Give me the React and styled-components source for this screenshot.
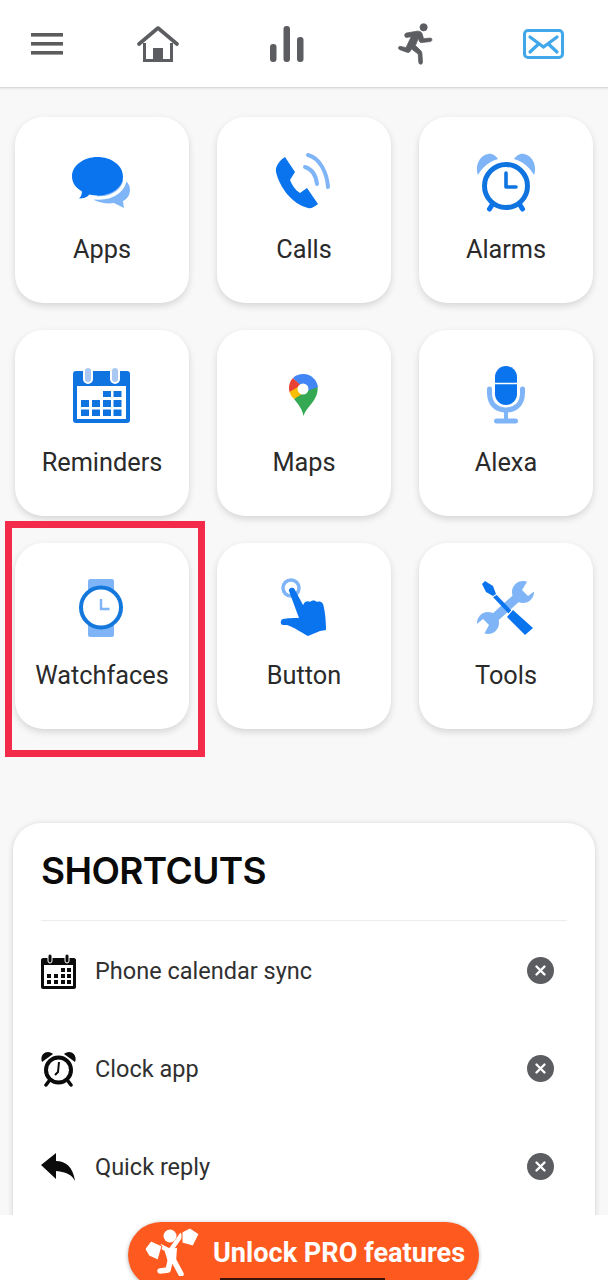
import styled, { createGlobalStyle } from "styled-components";

const GlobalStyle = createGlobalStyle`
  html, body {
    margin: 0;
    padding: 0;
    background: #f8f8f8;
    font-family: Roboto, "Liberation Sans", sans-serif;
  }
`;

const BLUE = "#0a74ee";
const LIGHT = "#7fb5f7";
const GREY = "#5c5d60";

const Page = styled.div`
  position: relative;
  width: 608px;
  height: 1280px;
  overflow: hidden;
  background: #f8f8f8;
`;

const TopBar = styled.header`
  height: 88px;
  background: #fff;
  border-bottom: 1px solid #d9d9d9;
  box-shadow: 0 1px 2px rgba(0, 0, 0, 0.08);
  display: flex;
  align-items: center;
  gap: 91px;
  padding: 0 0 0 31px;
  box-sizing: border-box;
`;

const Grid = styled.section`
  display: grid;
  grid-template-columns: repeat(3, 174px);
  grid-auto-rows: 186px;
  column-gap: 28px;
  row-gap: 27px;
  padding: 29px 0 0 15px;
`;

const Tile = styled.div`
  position: relative;
  background: #fff;
  border-radius: 28px;
  box-shadow: 0 3px 7px rgba(0, 0, 0, 0.14);
  display: flex;
  flex-direction: column;
  align-items: center;
  padding-top: 31px;
  box-sizing: border-box;
`;

const TileLabel = styled.span`
  margin-top: 16px;
  font-size: 25.3px;
  line-height: 32px;
  color: #2a2a2a;
`;

const Highlight = styled.div`
  position: absolute;
  left: -10px;
  top: -22px;
  width: 200px;
  height: 236px;
  box-sizing: border-box;
  border: 7px solid #f32a4a;
  pointer-events: none;
`;

const Card = styled.section`
  margin: 94px 13px 0;
  background: #fff;
  border-radius: 28px;
  box-shadow: 0 1px 6px rgba(0, 0, 0, 0.16);
  padding: 0 28px;
  height: 500px;
`;

const CardTitle = styled.h2`
  margin: 0;
  height: 98px;
  box-sizing: border-box;
  padding-top: 25px;
  font-family: Inter, "Open Sans", sans-serif;
  font-size: 37px;
  line-height: 46px;
  font-weight: 600;
  letter-spacing: -0.6px;
  color: #0a0a0a;
  border-bottom: 1px solid #ececec;
`;

const Row = styled.div`
  height: 98px;
  display: flex;
  align-items: center;
  gap: 19px;
  &:first-of-type {
    margin-top: 1px;
  }
`;

const RowIcon = styled.svg`
  width: 35px;
  height: 36px;
  flex: none;
`;

const RowLabel = styled.span`
  flex: 1;
  font-size: 23.5px;
  color: #303030;
`;

const Remove = styled.span`
  width: 27px;
  height: 27px;
  border-radius: 50%;
  background: ${GREY};
  display: flex;
  align-items: center;
  justify-content: center;
  margin: 0 13px 2px 0;
`;

const BottomBar = styled.footer`
  position: absolute;
  left: 0;
  right: 0;
  bottom: 0;
  height: 65px;
  background: #fff;
  display: flex;
  justify-content: center;
  padding-top: 7px;
  box-sizing: border-box;
`;

const ProButton = styled.div`
  width: 351px;
  height: 66px;
  margin-left: -1px;
  flex: none;
  border-radius: 33px;
  background: #fe5a20;
  box-shadow: 0 1px 4px rgba(0, 0, 0, 0.3);
  display: flex;
  align-items: flex-start;
  box-sizing: border-box;
  padding: 2px 0 0 16px;
  gap: 13px;
`;

const ProLabel = styled.span`
  color: #fff;
  font-size: 27.1px;
  line-height: 58px;
  font-weight: 700;
  white-space: nowrap;
`;

const NavHandle = styled.div`
  position: absolute;
  left: 220px;
  bottom: 0;
  width: 165px;
  height: 2px;
  background: #3a1408;
`;

const Glyph = styled.svg`
  display: block;
  flex: none;
`;

const MenuGlyph = styled(Glyph)`
  margin-right: -17px;
`;

const RunnerGlyph = styled(Glyph)`
  margin-left: 2px;
`;

const MailGlyph = styled(Glyph)`
  margin-left: -3px;
`;

const Hamburger = () => (
  <MenuGlyph width="32" height="22" viewBox="0 0 32 22" fill="#5c5c5c">
    <rect width="32" height="3.6" />
    <rect y="9" width="32" height="3.6" />
    <rect y="18" width="32" height="3.6" />
  </MenuGlyph>
);

const HomeIcon = () => (
  <Glyph width="42" height="36" viewBox="0 0 42 36">
    <path d="M2 18 21 2l19 16" fill="none" stroke={GREY} strokeWidth="3.6" strokeLinecap="round" strokeLinejoin="round" />
    <path d="M7.500 17v17.500h27V17" fill="none" stroke={GREY} strokeWidth="3" />
    <rect x="16" y="22" width="10" height="13" fill={GREY} />
  </Glyph>
);

const BarsIcon = () => (
  <Glyph width="34" height="36" viewBox="0 0 34 36" fill={GREY}>
    <rect x="0" y="18" width="6.500" height="18" rx="3" />
    <rect x="13.500" y="0" width="6.500" height="36" rx="3" />
    <rect x="27" y="11" width="6.500" height="25" rx="3" />
  </Glyph>
);

const RunnerIcon = () => (
  <RunnerGlyph width="38" height="42" viewBox="0 0 38 44" fill={GREY} stroke={GREY} strokeWidth="0.8">
    <circle cx="27" cy="4.500" r="3.800" />
    <path d="M9 10.500 20 8.600c3-.4 5 .8 5.500 3l1.400 4.800 7-.6c2.200-.2 2.400 3.300.2 3.600l-9 1.100c-1.300.1-2.300-.5-2.700-1.700l-1-2.700-3 7.500 5.500 5.300c.9.900 1.200 1.700 1.300 2.900l.6 9.200c.1 2.700-3.700 2.900-3.900.2l-.6-8.600-7-5.400-1.600 2.600c-.6 1-1.500 1.300-2.600 1L2 27.900c-2.300-.9-1.400-4 1-3.400l5.500 1.300L14 14.300l-4.600.8c-2.700.4-3-4.100-.4-4.600z" />
  </RunnerGlyph>
);

const MailIcon = () => (
  <MailGlyph width="41" height="30" viewBox="0 0 41 30" fill="none" stroke="#3fa7ea">
    <rect x="1.500" y="1.500" width="38" height="27" rx="3.500" strokeWidth="3" />
    <path d="M7 8l13.500 10L34 8M7 23l8-7.500M34 23l-8-7.500" strokeWidth="3.200" strokeLinecap="round" />
  </MailGlyph>
);

const IconBox = styled.svg`
  display: block;
  width: 64px;
  height: 70px;
  flex: none;
`;

const AppsIcon = () => (
  <IconBox viewBox="0 0 64 70">
    <path d="M38 30C50 28 60 32 60 42c0 5-3 9-7 11l1 7-10-5c-6 1-14 0-20-3z" fill={LIGHT} />
    <path d="M55 30c0 11-11 20-26 20-3 0-5 0-7-1" fill="none" stroke="#fff" strokeWidth="3.500" />
    <path d="M27.500 9c14 0 25.500 8.500 25.500 19.500S41.500 47.500 27.500 47.500c-2.800 0-5.500-.4-8-1-3 3-6 4-10.500 4 2-2 3-4.500 3-7C6 40 2 35 2 28.500 2 17.500 13.500 9 27.500 9z" fill={BLUE} />
  </IconBox>
);

const CallsIcon = () => (
  <IconBox viewBox="0 0 64 70">
    <path d="M13 9 23 24 18 32C20 37 23 42 28 45L35 40 46 56C42 59 39 61 36 60 20 56 8 40 4 24 3 18 8 12 13 9z" fill={BLUE} />
    <path d="M33 19c7 2 11 9 12 17" fill="none" stroke={LIGHT} strokeWidth="4" strokeLinecap="round" />
    <path d="M36 7c12 3 19 18 20 32" fill="none" stroke={LIGHT} strokeWidth="4" strokeLinecap="round" />
  </IconBox>
);

const AlarmIcon = () => (
  <IconBox viewBox="0 0 64 70">
    <path d="M4 27C1 20 4 8 14 6 18 5 22 8 24 11 14 14 8 20 4 27zM60 27C63 20 60 8 50 6 46 5 42 8 40 11 50 14 56 20 60 27z" fill={LIGHT} />
    <path d="M18 57l-2.500 4M46 57l2.500 4" stroke={BLUE} strokeWidth="5" strokeLinecap="round" />
    <circle cx="32" cy="38" r="21.500" fill="#fff" stroke="#0f74e0" strokeWidth="5" />
    <path d="M32 25v14h10" fill="none" stroke="#0f74e0" strokeWidth="3.600" strokeLinecap="round" strokeLinejoin="round" />
  </IconBox>
);

const CalendarIcon = () => (
  <IconBox viewBox="0 0 64 70">
    <path d="M6 10h51c2 0 3 1 3 3v46c0 2-1 3-3 3H6c-2 0-3-1-3-3V13c0-2 1-3 3-3z" fill="#0f74e0" />
    <rect x="7" y="25" width="49" height="33" fill="#fff" />
    <rect x="14" y="6" width="8" height="16" rx="4" fill="#a9c9f2" stroke="#fff" strokeWidth="2" />
    <rect x="41" y="6" width="8" height="16" rx="4" fill="#a9c9f2" stroke="#fff" strokeWidth="2" />
    <g fill="#0f74e0">
      <rect x="33" y="30" width="8" height="6" /><rect x="43.500" y="30" width="8" height="6" />
      <rect x="11" y="39" width="8" height="7" /><rect x="22" y="39" width="8" height="7" />
      <rect x="33" y="39" width="8" height="7" /><rect x="43.500" y="39" width="8" height="7" />
      <rect x="11" y="48.500" width="8" height="6.500" /><rect x="22" y="48.500" width="8" height="6.500" />
      <rect x="33" y="48.500" width="8" height="6.500" /><rect x="43.500" y="48.500" width="8" height="6.500" />
    </g>
  </IconBox>
);

const MapsIcon = () => (
  <IconBox viewBox="0 0 64 70">
    <path d="M31.500 55C30 47 26 43 22 38L31 30 45.500 25C46.500 32 43 38 40 42 36 47 33 50 31.500 55z" fill="#34a853" />
    <path d="M22 38C20 36 18.500 34 17.500 31L27 23 35 30z" fill="#fbbc04" />
    <path d="M17.500 31C16 25 18 20 21 17L29 24z" fill="#ea4335" />
    <path d="M21 17C24 14 27 13 31.500 13 39 13 45 19 46 26L35 30z" fill="#4285f4" />
    <circle cx="31" cy="28" r="5.500" fill="#fff" />
  </IconBox>
);

const MicIcon = () => (
  <IconBox viewBox="0 0 64 70">
    <path d="M15.500 28v4c0 11 7 17 16.500 17s16.500-6 16.500-17v-4" fill="none" stroke={LIGHT} strokeWidth="5" strokeLinecap="round" />
    <rect x="21" y="5" width="22" height="39" rx="11" fill={BLUE} />
    <path d="M21 22.500h22" stroke="#fff" strokeWidth="1.500" />
    <rect x="30" y="49" width="4" height="10" fill={LIGHT} />
    <rect x="20" y="57.500" width="24" height="5" rx="2.500" fill={LIGHT} />
  </IconBox>
);

const WatchIcon = () => (
  <IconBox viewBox="0 0 64 70">
    <path d="M18 7c0-1 1-2 2-2h22c1 0 2 1 2 2v54c0 1-1 2-2 2H20c-1 0-2-1-2-2z" fill={LIGHT} />
    <circle cx="31" cy="33.500" r="20" fill="#fff" stroke="#1377dc" strokeWidth="4" />
    <path d="M31 25v10h8.500" fill="none" stroke={LIGHT} strokeWidth="2.400" />
  </IconBox>
);

const HandIcon = () => (
  <IconBox viewBox="0 0 64 70">
    <circle cx="19" cy="14" r="8" fill="none" stroke={LIGHT} strokeWidth="3.500" />
    <path d="M17 17c-1-3 5-5 6-1L31 31 33 28C35 27 37 27 38 28 40 26 43 26 45 28 48 27 50 28 51 30 53 36 54 48 54 56L48 57 36 62C30 59 22 53 15 51L11 51C8 51 8 46 11 45 15 44 22 44 27 44L24 36z" fill={BLUE} />
  </IconBox>
);

const ToolsIcon = () => (
  <IconBox viewBox="0 0 64 70">
    <path d="M17 47 47 20" stroke={LIGHT} strokeWidth="9" />
    <circle cx="49" cy="18" r="11" fill={LIGHT} />
    <circle cx="14" cy="49" r="11" fill={LIGHT} />
    <path d="M48 16 56 3 66 13 54 22z" fill="#fff" />
    <path d="M15 51 8 64-2 54 9 45z" fill="#fff" />
    <g stroke="#fff" strokeWidth="2" paintOrder="stroke">
      <path d="M36 38 17 18" stroke={BLUE} strokeWidth="4" />
      <path d="M8 10 11 7 19 12 22 20 19 22 12 18z" fill={BLUE} />
      <path d="M39 36 59 54 51 61 33 43z" fill={BLUE} />
    </g>
  </IconBox>
);

const ShopperIcon = () => (
  <Glyph width="56" height="52" viewBox="0 0 56 52" fill="#fff">
    <circle cx="26" cy="12" r="6.500" />
    <path d="M16 22 26 27 38 10" fill="none" stroke="#fff" strokeWidth="4.500" strokeLinejoin="round" />
    <path d="M20 25 33 24 32 38 24 38z" />
    <path d="M26.500 36 24 46 16 47M29.500 36 37 50" fill="none" stroke="#fff" strokeWidth="5.500" strokeLinecap="round" strokeLinejoin="round" />
    <path d="M1 25 7 17 18 22 14 36 5 32z" stroke="#fe5a20" strokeWidth="1" />
    <path d="M38 8 46 4 55 10 49 22 38 19z" stroke="#fe5a20" strokeWidth="1" />
  </Glyph>
);

const CalendarSmall = () => (
  <RowIcon viewBox="0 0 35 36">
    <path d="M2 5h31c1 0 2 1 2 2v27c0 1-1 2-2 2H2c-1 0-2-1-2-2V7c0-1 1-2 2-2z" fill="#0b0b0b" />
    <rect x="3" y="12" width="29" height="21" fill="#fff" />
    <rect x="7" y="1" width="4" height="9" rx="2" fill="#0b0b0b" stroke="#fff" strokeWidth="1" />
    <rect x="24" y="1" width="4" height="9" rx="2" fill="#0b0b0b" stroke="#fff" strokeWidth="1" />
    <g fill="#0b0b0b">
      <rect x="20" y="15" width="4" height="4" /><rect x="26" y="15" width="4" height="4" />
      <rect x="6" y="21" width="4" height="4" /><rect x="13" y="21" width="4" height="4" />
      <rect x="20" y="21" width="4" height="4" /><rect x="26" y="21" width="4" height="4" />
      <rect x="6" y="27" width="4" height="4" /><rect x="13" y="27" width="4" height="4" />
      <rect x="20" y="27" width="4" height="4" /><rect x="26" y="27" width="4" height="4" />
    </g>
  </RowIcon>
);

const ClockSmall = () => (
  <RowIcon viewBox="0 0 35 36">
    <path d="M1 11C-1 6 2 1 7 1c2 0 4 1 5 2zM34 11c2-5-1-10-6-10-2 0-4 1-5 2z" fill="#0b0b0b" />
    <circle cx="17.500" cy="19" r="12.500" fill="#fff" stroke="#0b0b0b" strokeWidth="4" />
    <path d="M18 11l-1 10-3 3" fill="none" stroke="#0b0b0b" strokeWidth="2" />
    <path d="M8 30l-3 4M27 30l3 4" stroke="#0b0b0b" strokeWidth="3.500" strokeLinecap="round" />
  </RowIcon>
);

const ReplySmall = () => (
  <RowIcon viewBox="0 0 35 36">
    <path d="M0 16 15 4v8c10 0 17 6 19 20-3-6-8-9-19-10v8z" fill="#0b0b0b" />
  </RowIcon>
);

const RemoveIcon = () => (
  <Glyph width="13" height="13" viewBox="0 0 13 13">
    <path d="M2.500 2.500l8 8M10.500 2.500l-8 8" stroke="#fff" strokeWidth="2.400" strokeLinecap="round" />
  </Glyph>
);

const tiles = [
  { label: "Apps", Icon: AppsIcon },
  { label: "Calls", Icon: CallsIcon },
  { label: "Alarms", Icon: AlarmIcon },
  { label: "Reminders", Icon: CalendarIcon },
  { label: "Maps", Icon: MapsIcon },
  { label: "Alexa", Icon: MicIcon },
  { label: "Watchfaces", Icon: WatchIcon, marked: true },
  { label: "Button", Icon: HandIcon },
  { label: "Tools", Icon: ToolsIcon },
];

const shortcuts = [
  { label: "Phone calendar sync", Icon: CalendarSmall },
  { label: "Clock app", Icon: ClockSmall },
  { label: "Quick reply", Icon: ReplySmall },
];

export default function App() {
  return (
    <Page>
      <GlobalStyle />
      <TopBar>
        <Hamburger />
        <HomeIcon />
        <BarsIcon />
        <RunnerIcon />
        <MailIcon />
      </TopBar>

      <Grid>
        {tiles.map(({ label, Icon, marked }) => (
          <Tile key={label}>
            <Icon />
            <TileLabel>{label}</TileLabel>
            {marked && <Highlight />}
          </Tile>
        ))}
      </Grid>

      <Card>
        <CardTitle>SHORTCUTS</CardTitle>
        {shortcuts.map(({ label, Icon }) => (
          <Row key={label}>
            <Icon />
            <RowLabel>{label}</RowLabel>
            <Remove>
              <RemoveIcon />
            </Remove>
          </Row>
        ))}
      </Card>

      <BottomBar>
        <ProButton>
          <ShopperIcon />
          <ProLabel>Unlock PRO features</ProLabel>
        </ProButton>
        <NavHandle />
      </BottomBar>
    </Page>
  );
}
